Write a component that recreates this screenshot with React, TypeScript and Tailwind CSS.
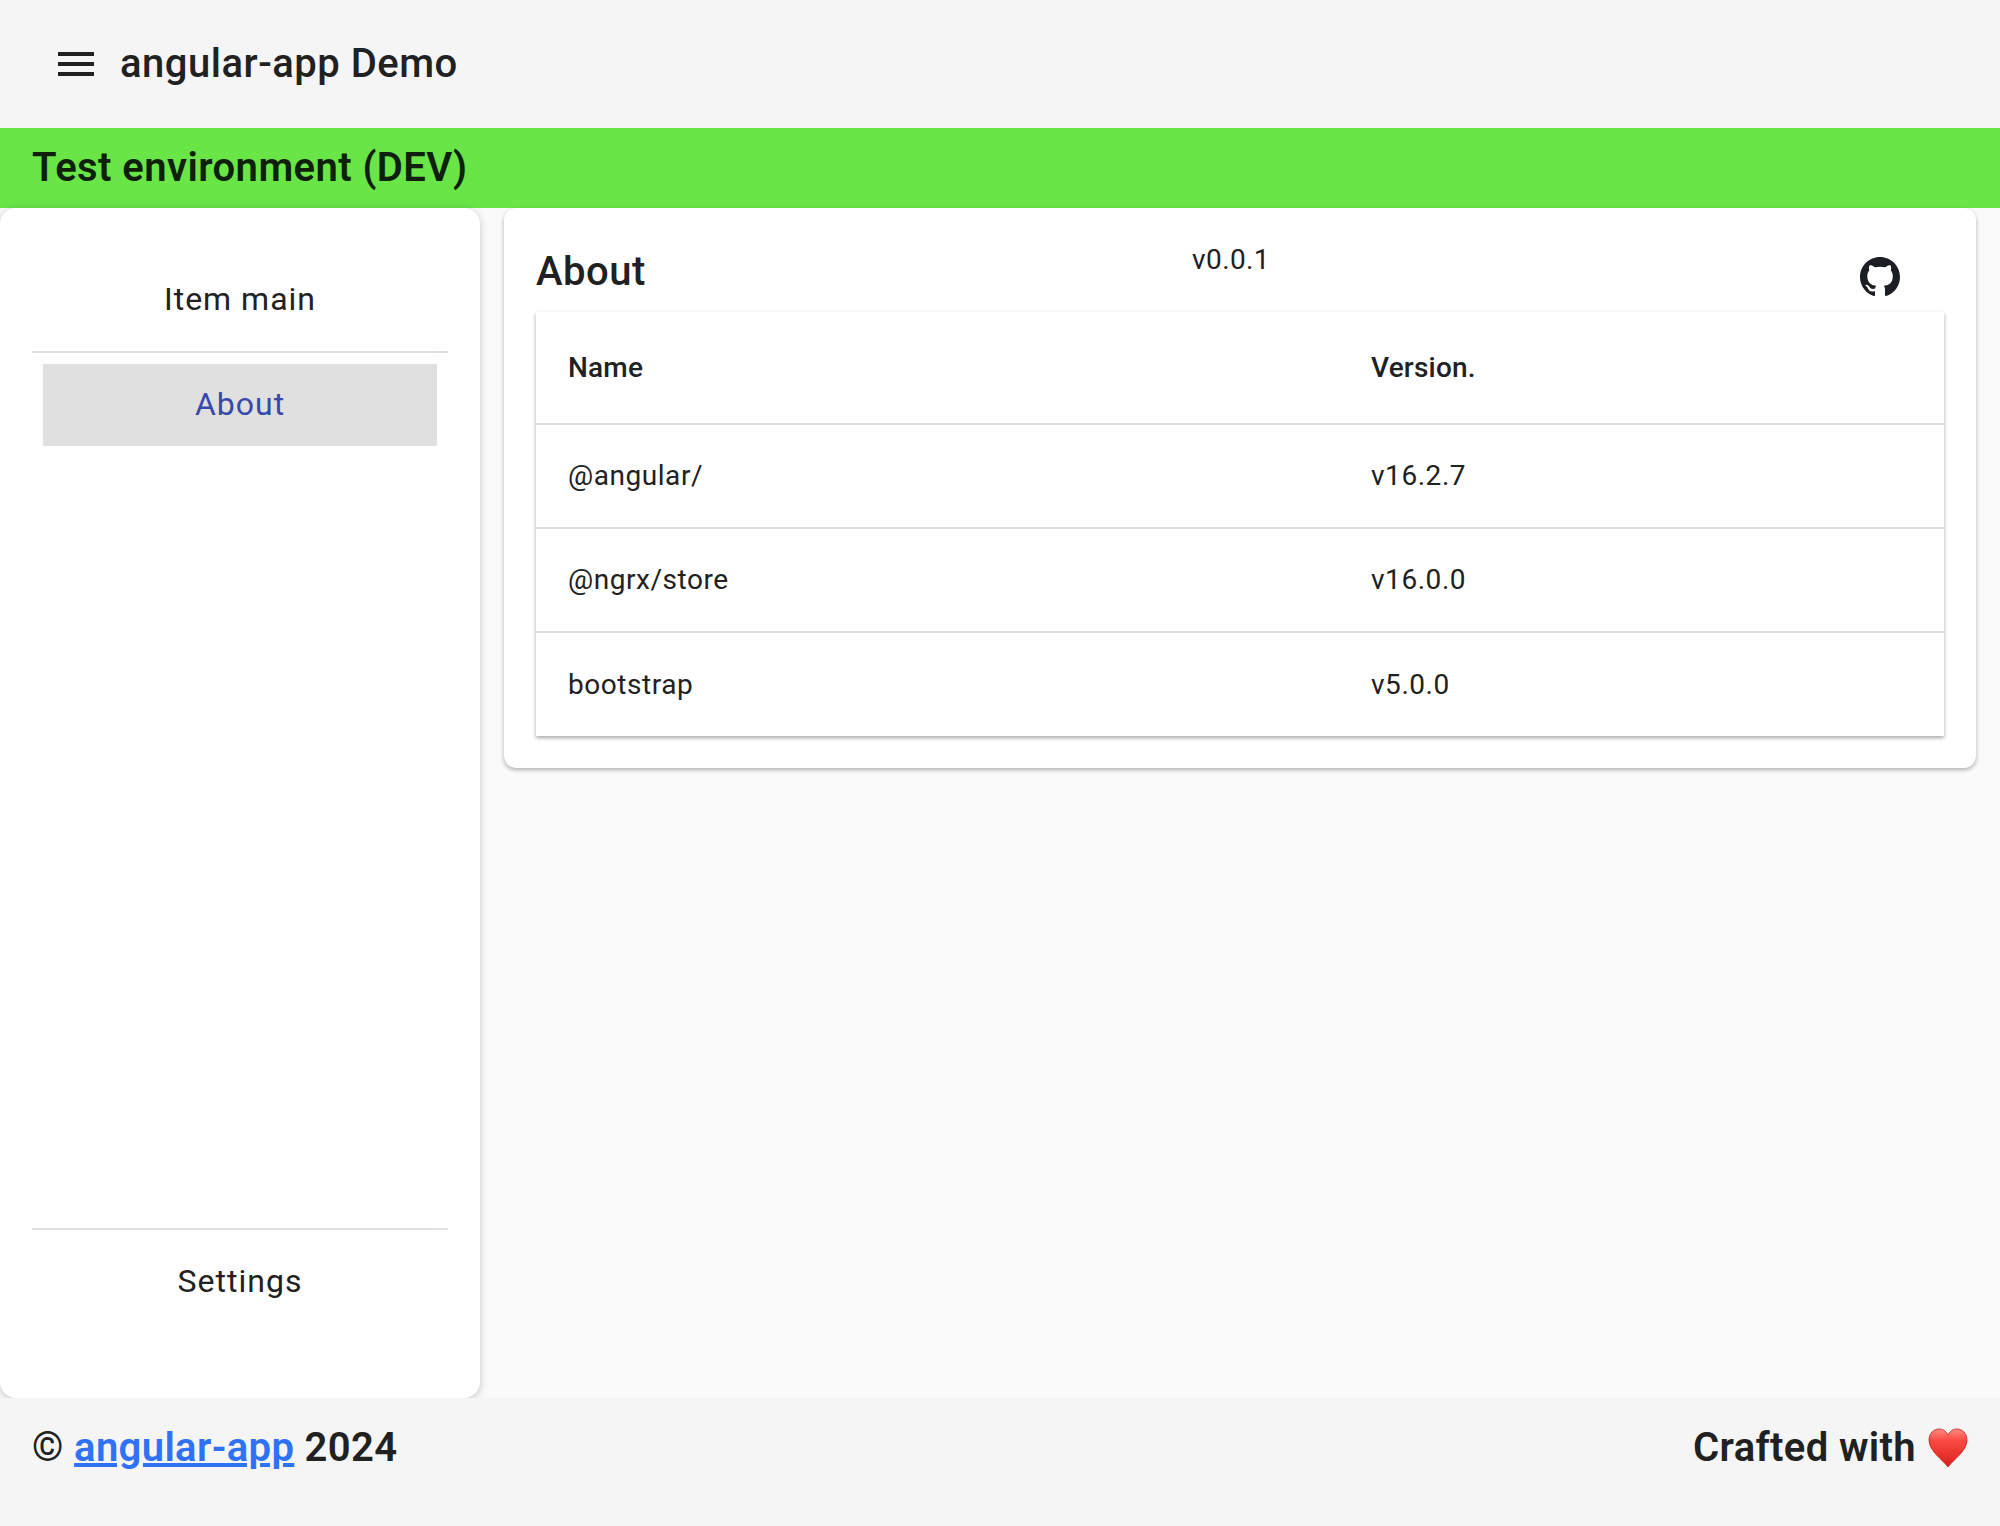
const ROWS = [
  { name: "@angular/", version: "v16.2.7" },
  { name: "@ngrx/store", version: "v16.0.0" },
  { name: "bootstrap", version: "v5.0.0" },
];

function MenuIcon() {
  return (
    <svg viewBox="0 0 24 24" className="w-12 h-12 fill-[#212121]">
      <path d="M3 18h18v-2H3v2zm0-5h18v-2H3v2zm0-7v2h18V6H3z" />
    </svg>
  );
}

function GithubMark() {
  return (
    <svg viewBox="0 0 16 16" className="w-10 h-10 fill-[#1b1f23]">
      <path d="M8 0C3.58 0 0 3.58 0 8c0 3.54 2.29 6.53 5.47 7.59.4.07.55-.17.55-.38 0-.19-.01-.82-.01-1.49-2.01.37-2.53-.49-2.69-.94-.09-.23-.48-.94-.82-1.13-.28-.15-.68-.52-.01-.53.63-.01 1.08.58 1.23.82.72 1.21 1.87.87 2.33.66.07-.52.28-.87.51-1.07-1.78-.2-3.64-.89-3.64-3.95 0-.87.31-1.59.82-2.15-.08-.2-.36-1.02.08-2.12 0 0 .67-.21 2.2.82.64-.18 1.32-.27 2-.27.68 0 1.36.09 2 .27 1.53-1.04 2.2-.82 2.2-.82.44 1.1.16 1.92.08 2.12.51.56.82 1.27.82 2.15 0 3.07-1.87 3.75-3.65 3.95.29.25.54.73.54 1.48 0 1.07-.01 1.93-.01 2.2 0 .21.15.46.55.38A8.013 8.013 0 0016 8c0-4.42-3.58-8-8-8z" />
    </svg>
  );
}

function Heart() {
  return (
    <svg viewBox="0 0 40 40" className="w-10 h-10">
      <defs>
        <linearGradient id="heart" x1="0" y1="0" x2="0" y2="1">
          <stop offset="0" stopColor="#ff8a80" />
          <stop offset="0.3" stopColor="#fb4a44" />
          <stop offset="1" stopColor="#d81f1c" />
        </linearGradient>
      </defs>
      <path
        d="M20 39C14 31 1 23 1 12 1 5 6 1 11 1c4 0 7 2 9 6 2-4 5-6 9-6 5 0 10 4 10 11 0 11-13 19-19 27z"
        fill="url(#heart)"
        stroke="#c8201c"
        strokeWidth="0.8"
      />
    </svg>
  );
}

export default function App() {
  return (
    <div className="flex flex-col w-[2000px] h-[1526px] bg-[#fafafa] text-[#212121] font-['Roboto',sans-serif] overflow-hidden">
      {/* Top bar */}
      <header className="flex items-center h-32 shrink-0 bg-[#f5f5f5] pl-[52px]">
        <MenuIcon />
        <span className="ml-5 text-[40px] font-medium tracking-[0.5px] leading-none -mt-[1px]">angular-app Demo</span>
      </header>

      {/* Environment banner */}
      <div className="flex items-center h-20 shrink-0 bg-[#69e548] px-8">
        <span className="text-[40px] font-semibold tracking-[0.42px] text-[#0e1f0a] leading-none">Test environment (DEV)</span>
      </div>

      <div className="flex flex-1 min-h-0">
        {/* Side nav */}
        <aside className="flex flex-col w-[480px] shrink-0 bg-white rounded-2xl shadow-[0_2px_8px_rgba(0,0,0,0.22)] pl-8 pr-[46px] pt-[45px] pb-[78px] z-10">
          <div className="flex flex-col flex-1 bg-[#fefefe]">
            <div className="flex items-center justify-center h-[98px] pb-[6px] pl-[14px] text-[32px] tracking-[1px]">Item main</div>
            <div className="h-0.5 -mr-[14px] bg-[#e0e0e0]" />
            <div className="flex items-center justify-center h-[82px] ml-[11px] -mr-[3px] mt-[11px] pb-0.5 bg-[#e0e0e0] text-[32px] tracking-[1px] text-[#3949ab]">
              About
            </div>
            <div className="flex-1" />
            <div className="h-0.5 -mr-[14px] bg-[#e0e0e0]" />
            <div className="flex items-center justify-center h-[90px] pt-3 pl-[14px] text-[32px] tracking-[1px]">Settings</div>
          </div>
        </aside>

        {/* Main content */}
        <main className="flex-1 min-w-0 pl-6 pr-6">
          <section className="bg-white rounded-xl shadow-[0_2px_4px_rgba(0,0,0,0.3)] px-8 pt-[32px] pb-8">
            <div className="flex h-[72px]">
              <h1 className="w-[635px] pt-2 text-[40px] font-medium tracking-[0.5px] leading-[48px]">About</h1>
              <span className="w-[120px] pt-1 text-center text-[28px] tracking-[0.4px] leading-[32px]">v0.0.1</span>
              <span className="ml-auto mr-[44px] mt-[17px]">
                <GithubMark />
              </span>
            </div>
            <table className="w-full border-collapse bg-white shadow-[0_2px_4px_rgba(0,0,0,0.35)] table-fixed">
              <thead>
                <tr className="h-28 border-b-2 border-[#e0e0e0] text-left text-[28px]">
                  <th className="w-[835px] pl-8 font-medium tracking-[0.2px]">Name</th>
                  <th className="font-medium tracking-[0.2px]">Version.</th>
                </tr>
              </thead>
              <tbody>
                {ROWS.map((row, i) => (
                  <tr key={row.name} className={i < ROWS.length - 1 ? "h-[104px] border-b-2 border-[#e0e0e0] text-[28px] tracking-[0.55px]" : "h-[104px] text-[28px] tracking-[0.55px]"}>
                    <td className="pl-8">{row.name}</td>
                    <td>{row.version}</td>
                  </tr>
                ))}
              </tbody>
            </table>
          </section>
        </main>
      </div>

      {/* Footer */}
      <footer className="flex items-center justify-between h-32 shrink-0 bg-[#f5f5f5] px-8 pb-[28px] text-[40px] font-semibold tracking-[0.35px] z-20">
        <span>
          © <a href="#" className="text-[#2f72f5] underline">angular-app</a> 2024
        </span>
        <span className="flex items-center gap-3">
          Crafted with <Heart />
        </span>
      </footer>
    </div>
  );
}
